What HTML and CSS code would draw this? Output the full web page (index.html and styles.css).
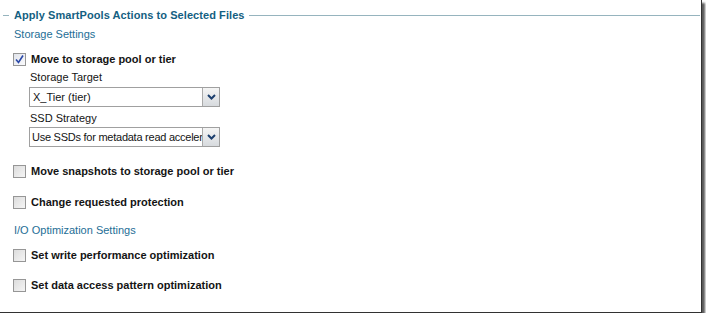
FILE: index.html
```html
<!DOCTYPE html>
<html lang="en">
	<head>
		<meta charset="utf-8">
		<title>Apply SmartPools Actions</title>
		<link rel="stylesheet" href="styles.css">
	</head>
	<body>
		<div id="frame">
			<div class="legend">
				<span class="line short"></span>
				<span class="legend-text">Apply SmartPools Actions to Selected Files</span>
				<span class="line long"></span>
			</div>

			<div class="group-title first">Storage Settings</div>

			<label class="row r1"><span class="box checked"><svg width="11" height="11" viewBox="0 0 11 11"><path d="M2 5.5 L4.5 8.5 L9 1.5" fill="none" stroke="#2a48a8" stroke-width="1.6"/></svg></span>Move to storage pool or tier</label>

			<div class="sub">
				<div class="field-label fl1">Storage Target</div>
				<div class="select s1"><span class="val">X_Tier (tier)</span><span class="arrow"><svg width="9" height="6" viewBox="0 0 9 6"><path d="M1 1 L4.5 4.5 L8 1" fill="none" stroke="#1c3f6e" stroke-width="2"/></svg></span></div>
				<div class="field-label fl2">SSD Strategy</div>
				<div class="select s2"><span class="val">Use SSDs for metadata read acceler</span><span class="arrow"><svg width="9" height="6" viewBox="0 0 9 6"><path d="M1 1 L4.5 4.5 L8 1" fill="none" stroke="#1c3f6e" stroke-width="2"/></svg></span></div>
			</div>

			<label class="row r2"><span class="box"></span>Move snapshots to storage pool or tier</label>
			<label class="row r3"><span class="box"></span>Change requested protection</label>

			<div class="group-title second">I/O Optimization Settings</div>

			<label class="row r4"><span class="box"></span>Set write performance optimization</label>
			<label class="row r5"><span class="box"></span>Set data access pattern optimization</label>
		</div>
	</body>
</html>
```

FILE: styles.css
```css
* {
	margin: 0px;
	padding: 0px;
	box-sizing: border-box;
}

body {
	background-color: rgb(255, 255, 255);
	font-family: "Liberation Sans", Arial, sans-serif;
	font-size: 11px;
	color: rgb(20, 20, 20);
}

/* screenshot frame with its shadow */
#frame {
	width: 702px;
	height: 313px;
	background-color: rgb(255, 255, 255);
	border-right: 1px solid rgb(50, 50, 50);
	border-bottom: 1px solid rgb(50, 50, 50);
	box-shadow: 3px 3px 2px rgb(90, 90, 90);
	overflow: hidden;
	padding-top: 8px;
}

.legend {
	display: flex;
	align-items: center;
	height: 14px;
	line-height: 14px;
	white-space: nowrap;
}

.line {
	display: block;
	height: 1px;
	background-color: rgb(150, 180, 190);
}

.line.short {
	width: 6px;
	margin-left: 3px;
	margin-right: 5px;
}

.line.long {
	flex: 1;
	margin-left: 4px;
	margin-right: 1px;
}

.legend-text {
	font-size: 11px;
	font-weight: bold;
	letter-spacing: 0.07px;
	color: rgb(20, 95, 130);
}

.group-title {
	margin-left: 14px;
	height: 14px;
	line-height: 14px;
	color: rgb(30, 110, 150);
}

.group-title.first {
	margin-top: 5px;
}

.group-title.second {
	margin-top: 14px;
}

.row {
	display: flex;
	align-items: center;
	height: 14px;
	margin-left: 13px;
	font-weight: bold;
}

.r1 { margin-top: 11px; }
.r2 { margin-top: 17px; }
.r3 { margin-top: 17px; }
.r4 { margin-top: 11px; }
.r5 { margin-top: 16px; }

.box {
	display: flex;
	align-items: center;
	justify-content: center;
	width: 13px;
	height: 13px;
	margin-right: 5px;
	border: 1px solid rgb(150, 150, 150);
	background: linear-gradient(135deg, rgb(220, 220, 220), rgb(245, 245, 245));
}

.box.checked {
	background: linear-gradient(135deg, rgb(225, 228, 235), rgb(250, 250, 252));
}

.sub {
	margin-left: 29px;
}

.field-label {
	height: 14px;
	line-height: 14px;
	margin-left: 1px;
}

.fl1 { margin-top: 4px; }
.fl2 { margin-top: 4px; }

.select {
	display: flex;
	width: 191px;
	height: 20px;
	border: 1px solid rgb(160, 160, 160);
	background-color: rgb(255, 255, 255);
}

.s1 { margin-top: 3px; }
.s2 { margin-top: 2px; }

.val {
	flex: 1;
	min-width: 0;
	overflow: hidden;
	white-space: nowrap;
	line-height: 18px;
	padding-left: 3px;
}

.s2 .val {
	padding-left: 2px;
	letter-spacing: -0.25px;
}

.arrow {
	flex-shrink: 0;
	display: flex;
	align-items: center;
	justify-content: center;
	width: 17px;
	border-left: 1px solid rgb(170, 170, 170);
	background: linear-gradient(rgb(245, 245, 245), rgb(215, 218, 222));
}
```
